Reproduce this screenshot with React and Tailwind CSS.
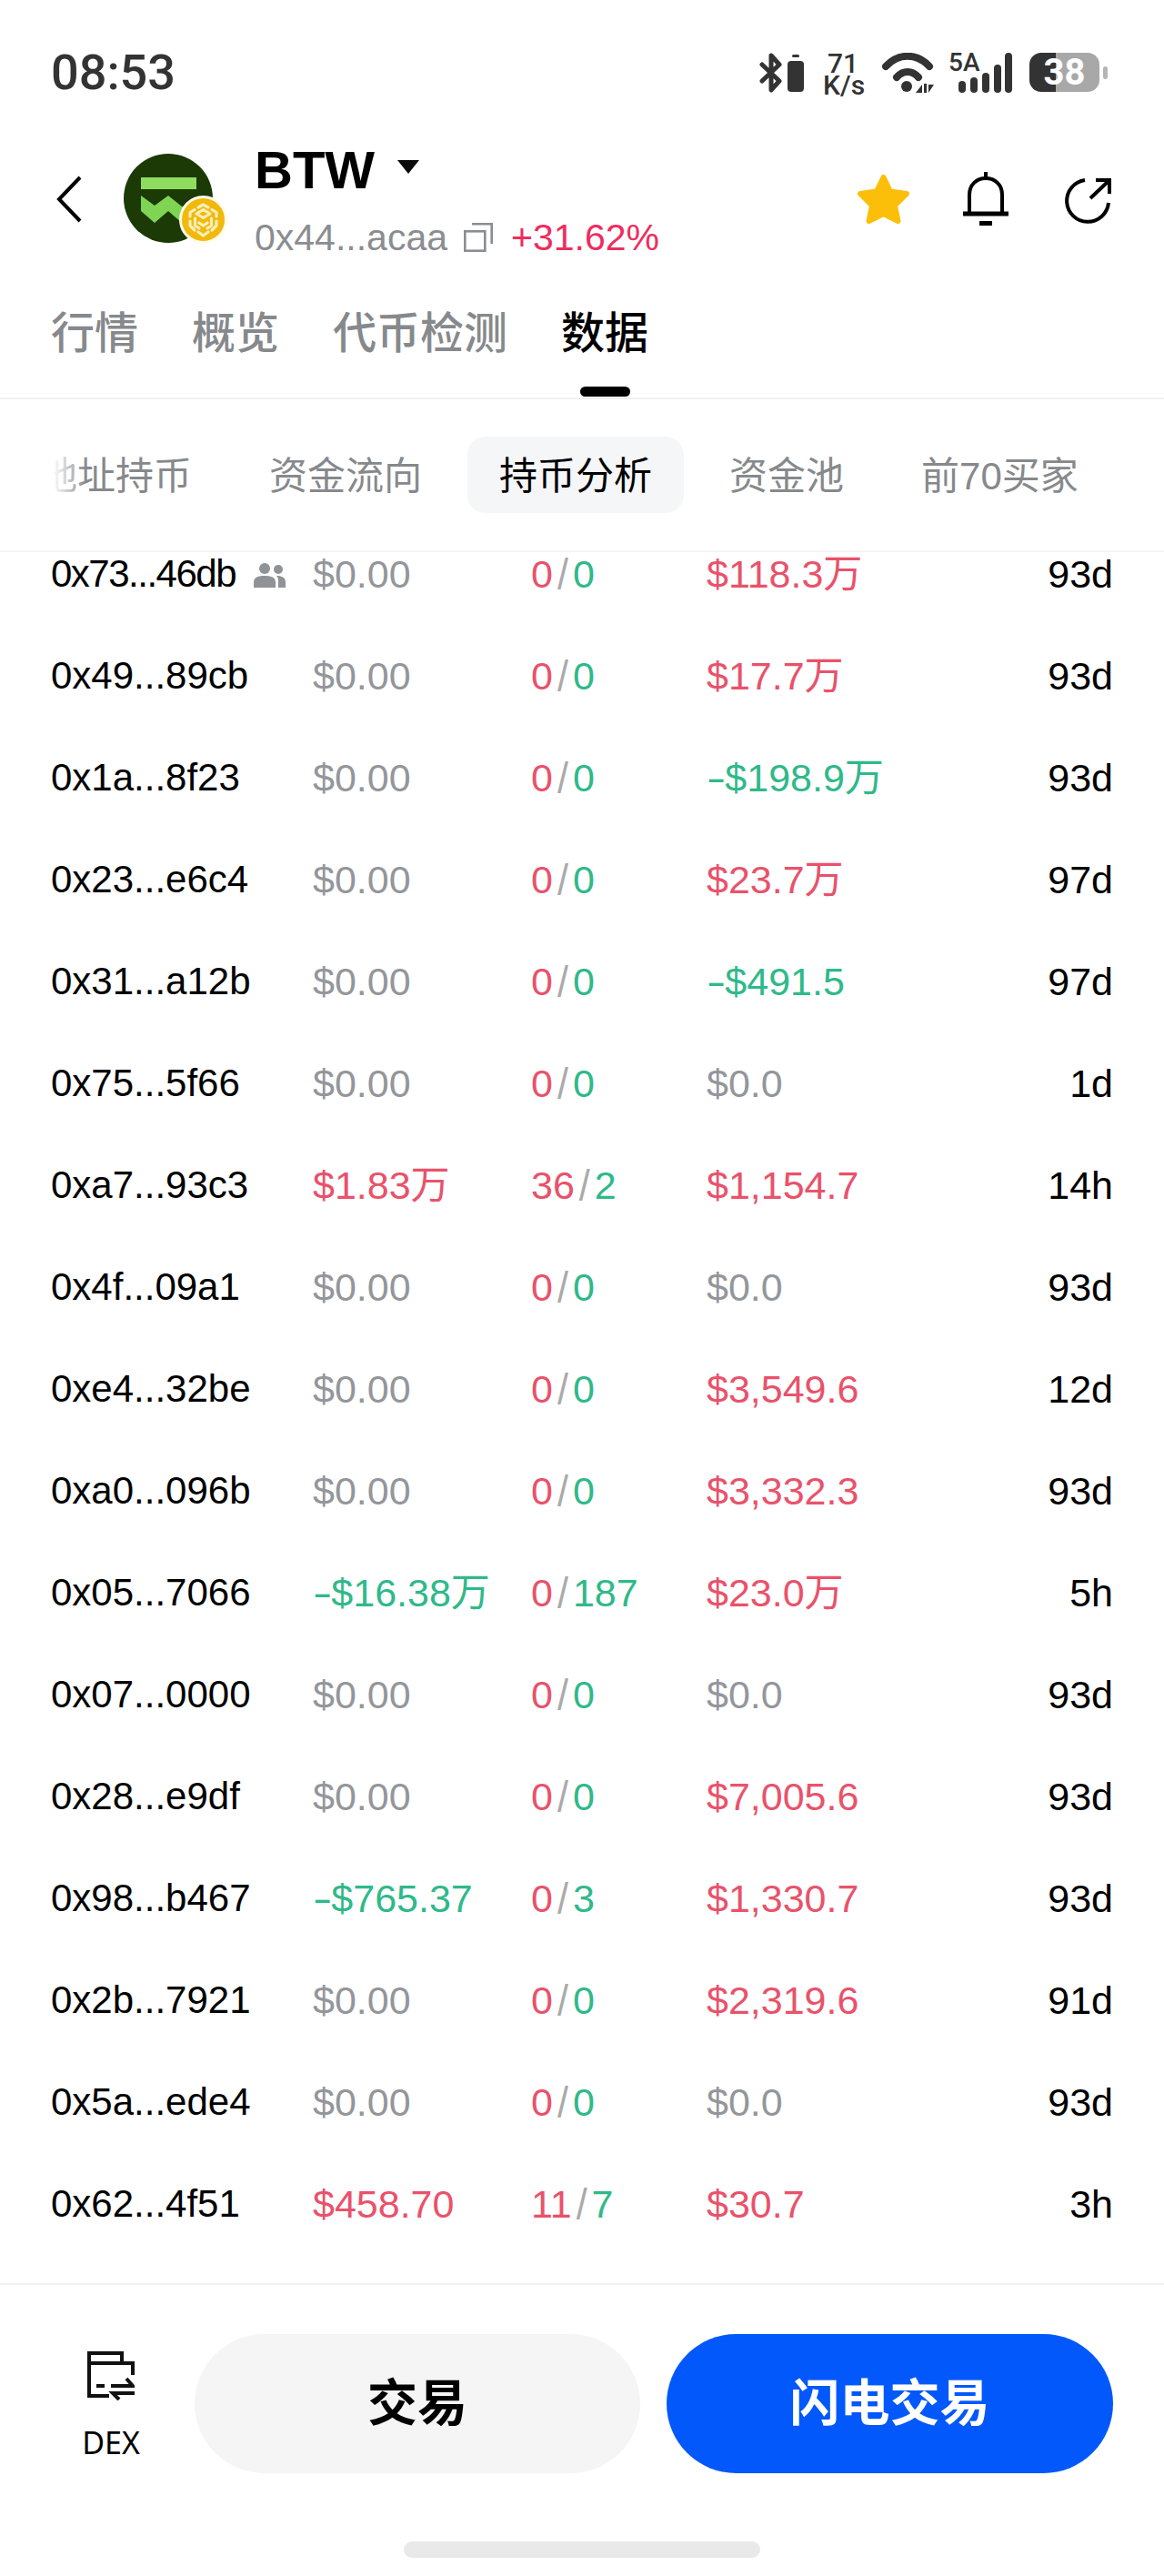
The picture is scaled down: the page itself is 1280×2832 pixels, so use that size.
import React from "react";

const rows = [
  { addr: "0x73...46db", group: true, bal: "$0.00", buy: "0", sell: "0", pnl: "$118.3万", pnlC: "red", age: "93d" },
  { addr: "0x49...89cb", bal: "$0.00", buy: "0", sell: "0", pnl: "$17.7万", pnlC: "red", age: "93d" },
  { addr: "0x1a...8f23", bal: "$0.00", buy: "0", sell: "0", pnl: "-$198.9万", pnlC: "green", age: "93d" },
  { addr: "0x23...e6c4", bal: "$0.00", buy: "0", sell: "0", pnl: "$23.7万", pnlC: "red", age: "97d" },
  { addr: "0x31...a12b", bal: "$0.00", buy: "0", sell: "0", pnl: "-$491.5", pnlC: "green", age: "97d" },
  { addr: "0x75...5f66", bal: "$0.00", buy: "0", sell: "0", pnl: "$0.0", pnlC: "gray", age: "1d" },
  { addr: "0xa7...93c3", bal: "$1.83万", balC: "red", buy: "36", sell: "2", pnl: "$1,154.7", pnlC: "red", age: "14h" },
  { addr: "0x4f...09a1", bal: "$0.00", buy: "0", sell: "0", pnl: "$0.0", pnlC: "gray", age: "93d" },
  { addr: "0xe4...32be", bal: "$0.00", buy: "0", sell: "0", pnl: "$3,549.6", pnlC: "red", age: "12d" },
  { addr: "0xa0...096b", bal: "$0.00", buy: "0", sell: "0", pnl: "$3,332.3", pnlC: "red", age: "93d" },
  { addr: "0x05...7066", bal: "-$16.38万", balC: "green", buy: "0", sell: "187", pnl: "$23.0万", pnlC: "red", age: "5h" },
  { addr: "0x07...0000", bal: "$0.00", buy: "0", sell: "0", pnl: "$0.0", pnlC: "gray", age: "93d" },
  { addr: "0x28...e9df", bal: "$0.00", buy: "0", sell: "0", pnl: "$7,005.6", pnlC: "red", age: "93d" },
  { addr: "0x98...b467", bal: "-$765.37", balC: "green", buy: "0", sell: "3", pnl: "$1,330.7", pnlC: "red", age: "93d" },
  { addr: "0x2b...7921", bal: "$0.00", buy: "0", sell: "0", pnl: "$2,319.6", pnlC: "red", age: "91d" },
  { addr: "0x5a...ede4", bal: "$0.00", buy: "0", sell: "0", pnl: "$0.0", pnlC: "gray", age: "93d" },
  { addr: "0x62...4f51", bal: "$458.70", balC: "red", buy: "11", sell: "7", pnl: "$30.7", pnlC: "red", age: "3h" },
];

const tone = {
  red: "text-[#e9526b]",
  green: "text-[#2fb98a]",
  gray: "text-[#93969b]",
};

// the app draws a longer minus sign with a wider gap after it
const Money = ({ value }) =>
  value.startsWith("-") ? (
    <>
      <span className="mr-[6px] inline-block origin-left scale-x-150">-</span>
      {value.slice(1)}
    </>
  ) : (
    value
  );

const StatusIcons = () => (
  <div className="flex items-start text-[#333333]">
    <svg width="27" height="44" viewBox="0 0 27 44" fill="none" stroke="#333333" strokeWidth="5" strokeLinecap="round" strokeLinejoin="round">
      <path d="M4 13 L23 31 L14 41 V3 L23 13 L4 31" />
    </svg>
    <svg width="18" height="42" viewBox="0 0 18 42" className="ml-[5px] mt-[2px]" fill="#333333">
      <rect x="5" y="0" width="8" height="3" rx="1.5" />
      <rect x="0" y="7" width="18" height="34" rx="4" />
    </svg>
    <div className="ml-[21px] w-[44px] text-center font-['Roboto',sans-serif] text-[30px] font-medium leading-[24px]">
      71
      <br />
      K/s
    </div>
    <svg width="58" height="44" viewBox="0 0 58 44" className="ml-[20px]" fill="none" stroke="#333333" strokeLinecap="round">
      <path d="M5 15 C19 0 39 0 53 15" strokeWidth="8" />
      <path d="M17 27 C24 19 34 19 41 27" strokeWidth="8" />
      <circle cx="28" cy="37" r="6" fill="#333333" stroke="none" />
      <path d="M38 44 L45 35 V44 Z M47 34 H50 V44 H47 Z M52 35 H58 L52 44 Z" fill="#333333" stroke="none" />
    </svg>
    <div className="relative ml-[16px] h-[44px] w-[70px]">
      <span className="absolute left-0 top-[-3px] font-['Roboto',sans-serif] text-[28px] font-medium leading-[28px]">5A</span>
      <svg width="70" height="44" viewBox="0 0 70 44" fill="#333333">
        <rect x="11" y="31" width="8" height="13" rx="4" />
        <rect x="24" y="27" width="8" height="17" rx="4" />
        <rect x="37" y="22" width="8" height="22" rx="4" />
        <rect x="50" y="13" width="8" height="31" rx="4" />
        <rect x="62" y="0" width="8" height="44" rx="4" />
      </svg>
    </div>
    <div className="ml-[19px] flex h-[43px] w-[77px] items-center justify-center rounded-[13px] bg-[linear-gradient(90deg,#333333_38%,#a8a8a8_38%)] font-['Roboto',sans-serif] text-[40px] font-bold text-white">
      38
    </div>
    <div className="ml-[4px] mt-[15px] h-[14px] w-[5px] rounded-full bg-[#b5b5b5]" />
  </div>
);

const Avatar = () => (
  <div className="relative mt-[13px] h-[100px] w-[98px] shrink-0">
    <svg width="98" height="100" viewBox="0 0 98 100">
      <circle cx="49" cy="50" r="49" fill="#1b3a06" />
      <rect x="19" y="27" width="61" height="13" fill="#8fdc5e" />
      <path d="M19 47 L34 58 L49 47 L64 59 L80 59 L80 64 L64 77 L49 64 L34 77 L19 64 Z" fill="#7fd454" />
    </svg>
    <svg width="53" height="53" viewBox="0 0 53 53" className="absolute left-[61px] top-[47px]">
      <circle cx="26.5" cy="26.5" r="25" fill="#f0b90b" stroke="#fffbea" strokeWidth="3" />
      <g fill="none" stroke="#fbeebb" strokeWidth="3.2" strokeLinejoin="round" strokeLinecap="round">
        <path d="M26.5 10 L32 13 M21 13 L26.5 10 M36 15.5 L41 18.5 V23 M41 28 V33 L36 38 M12 23 V18.5 L17 15.5 M12 28 V33 L17 38" />
        <path d="M26.5 15.5 L34 20 L26.5 24.5 L19 20 Z" />
        <path d="M17.5 25 V33 L22 36 M35.5 25 V33 L31 36" />
        <path d="M22 30 L26.5 33 L31 30 M21 40 L26.5 44 L32 40" />
      </g>
    </svg>
  </div>
);

const PeopleIcon = () => (
  <svg width="35" height="27" viewBox="0 0 35 27" fill="#8f9297" className="ml-[20px] mt-[2px] shrink-0">
    <circle cx="12" cy="6" r="6" />
    <circle cx="27" cy="7" r="5" />
    <path d="M0 27 V21 C0 15 6 14 12 14 C18 14 24 15 24 21 V27 Z" />
    <path d="M26 14 C31 14 35 16 35 21 V27 H27 V21 C27 18 27 16 25 14 Z" />
  </svg>
);

const App = () => {
  return (
    <div className="flex h-[2832px] w-[1280px] flex-col overflow-hidden bg-white font-['Liberation_Sans','Noto_Sans_CJK_SC',sans-serif]">
      {/* status bar */}
      <div className="flex h-[150px] shrink-0 items-start justify-between pl-[56px] pr-[62px] pt-[58px]">
        <span className="font-['Roboto',sans-serif] text-[54px] font-medium leading-[44px] text-[#333333]">08:53</span>
        <StatusIcons />
      </div>

      {/* token header */}
      <div className="flex h-[140px] shrink-0 items-start pl-[62px] pr-[58px] pt-[5px]">
        <svg width="28" height="52" viewBox="0 0 28 52" fill="none" stroke="#000" strokeWidth="4" className="mt-[38px] shrink-0">
          <path d="M26 2 L3 26 L26 50" />
        </svg>
        <div className="ml-[46px]">
          <Avatar />
        </div>
        <div className="ml-[46px] flex flex-col">
          <div className="flex h-[64px] items-center">
            <span className="text-[58px] font-bold leading-[64px] text-black">BTW</span>
            <svg width="24" height="15" viewBox="0 0 24 15" className="ml-[25px] mt-[-8px]">
              <path d="M0 0 H24 L12 15 Z" fill="#0a0a0a" />
            </svg>
          </div>
          <div className="mt-[20px] flex h-[44px] items-center">
            <span className="text-[41px] leading-[44px] text-[#8a8d91]">0x44...acaa</span>
            <svg width="32" height="32" viewBox="0 0 32 32" fill="none" stroke="#8a8d91" strokeWidth="2.6" className="ml-[18px]">
              <rect x="1.3" y="9.3" width="22" height="21.4" />
              <path d="M9 1.3 H30.7 V23" />
            </svg>
            <span className="ml-[20px] text-[41px] leading-[44px] text-[#ee2d5f]">+31.62%</span>
          </div>
        </div>
        <div className="ml-auto flex items-start">
          <svg width="59" height="56" viewBox="0 0 59 56" className="mt-[36px]">
            <path d="M29.5 4 L37 19.5 L55 22 L42 35 L45.5 52 L29.5 44 L13.5 52 L17 35 L4 22 L22 19.5 Z" fill="#fbbf0a" stroke="#fbbf0a" strokeWidth="6" strokeLinejoin="round" />
          </svg>
          <svg width="50" height="59" viewBox="0 0 50 59" fill="none" stroke="#000" strokeWidth="4" className="ml-[58px] mt-[34px]">
            <path d="M25 0 V7" />
            <path d="M7 45 V25 C7 14 15 7 25 7 C35 7 43 14 43 25 V45" />
            <path d="M0 46 H50" strokeWidth="5" />
            <path d="M18 56.5 H32" strokeWidth="5" />
          </svg>
          <svg width="52" height="52" viewBox="0 0 52 52" fill="none" stroke="#000" strokeWidth="4" className="ml-[61px] mt-[40px]">
            <path d="M23 3 A23 23 0 1 0 49 28" />
            <path d="M29 23 L49 4" />
            <path d="M35 3 H50 V18" />
          </svg>
        </div>
      </div>

      {/* main tabs */}
      <div className="flex h-[149px] shrink-0 items-start gap-[59px] border-b-2 border-[#f1f1f1] pl-[56px] pt-[47px]">
        {["行情", "概览", "代币检测", "数据"].map((t) => (
          <div key={t} className="flex flex-col items-center">
            <span className={`text-[48px] font-medium leading-[60px] ${t === "数据" ? "text-black" : "text-[#86898c]"}`}>{t}</span>
            {t === "数据" && <div className="mt-[28px] h-[11px] w-[55px] rounded-full bg-black" />}
          </div>
        ))}
      </div>

      {/* sub tabs */}
      <div className="relative flex h-[168px] shrink-0 items-center gap-[15px] overflow-hidden border-b-2 border-[#f5f5f5] pl-[8px]">
        {["地址持币", "资金流向", "持币分析", "资金池", "前70买家"].map((t) => (
          <div
            key={t}
            className={`flex h-[84px] shrink-0 items-center rounded-[20px] px-[35px] pt-[2px] text-[42px] ${
              t === "持币分析" ? "bg-[#f4f6f8] text-black" : "text-[#86898c]"
            }`}
          >
            {t}
          </div>
        ))}
        <div className="absolute inset-y-0 left-0 w-[95px] bg-[linear-gradient(90deg,#ffffff_58px,rgba(255,255,255,0)_95px)]" />
      </div>

      {/* holders list */}
      <div className="min-h-0 flex-1 overflow-hidden">
        <div className="-mt-[32px] flex flex-col px-[56px]">
          {rows.map((r) => (
            <div key={r.addr} className="grid h-[112px] shrink-0 grid-cols-[288px_240px_193px_1fr] items-center text-[43px] leading-[50px]">
              <div className="flex items-center text-[42px] text-black">
                <span className={r.group ? "tracking-[-1.5px]" : ""}>{r.addr}</span>
                {r.group && <PeopleIcon />}
              </div>
              <div className={tone[r.balC || "gray"]}>
                <Money value={r.bal} />
              </div>
              <div>
                <span className={tone.red}>{r.buy}</span>
                <span className="mx-[5px] inline-block scale-y-110 text-[#aaaaaa]">/</span>
                <span className={tone.green}>{r.sell}</span>
              </div>
              <div className="flex items-center justify-between">
                <span className={tone[r.pnlC]}>
                  <Money value={r.pnl} />
                </span>
                <span className="text-black">{r.age}</span>
              </div>
            </div>
          ))}
        </div>
      </div>

      {/* bottom actions */}
      <div className="flex h-[322px] shrink-0 flex-col border-t-2 border-[#f2f2f2]">
        <div className="mt-[54px] flex h-[153px] items-start pl-[56px]">
          <div className="flex w-[132px] flex-col items-center pt-[19px]">
            <svg width="52" height="54" viewBox="0 0 52 54" fill="none" stroke="#111111" strokeWidth="4">
              <path d="M2 50 V2 H38 V13 H50 V26" />
              <path d="M2 13 H38" />
              <path d="M0 49 H24" />
              <path d="M10 38 H19" />
              <path d="M26 38 H50 L43 30" />
              <path d="M52 46 H28 L35 53" />
            </svg>
            <span className="mt-[26px] font-['Noto_Sans',sans-serif] text-[34px] leading-[40px] text-black">DEX</span>
          </div>
          <div className="ml-[26px] flex h-[153px] w-[490px] items-center justify-center rounded-full bg-[#f5f5f6] text-[55px] font-bold text-black">
            交易
          </div>
          <div className="ml-[29px] flex h-[153px] w-[491px] items-center justify-center rounded-full bg-[#0258fb] text-[55px] font-bold text-white">
            闪电交易
          </div>
        </div>
        <div className="ml-[444px] mt-[75px] h-[18px] w-[392px] rounded-full bg-[#e9e9e9]" />
      </div>
    </div>
  );
};

export default App;
